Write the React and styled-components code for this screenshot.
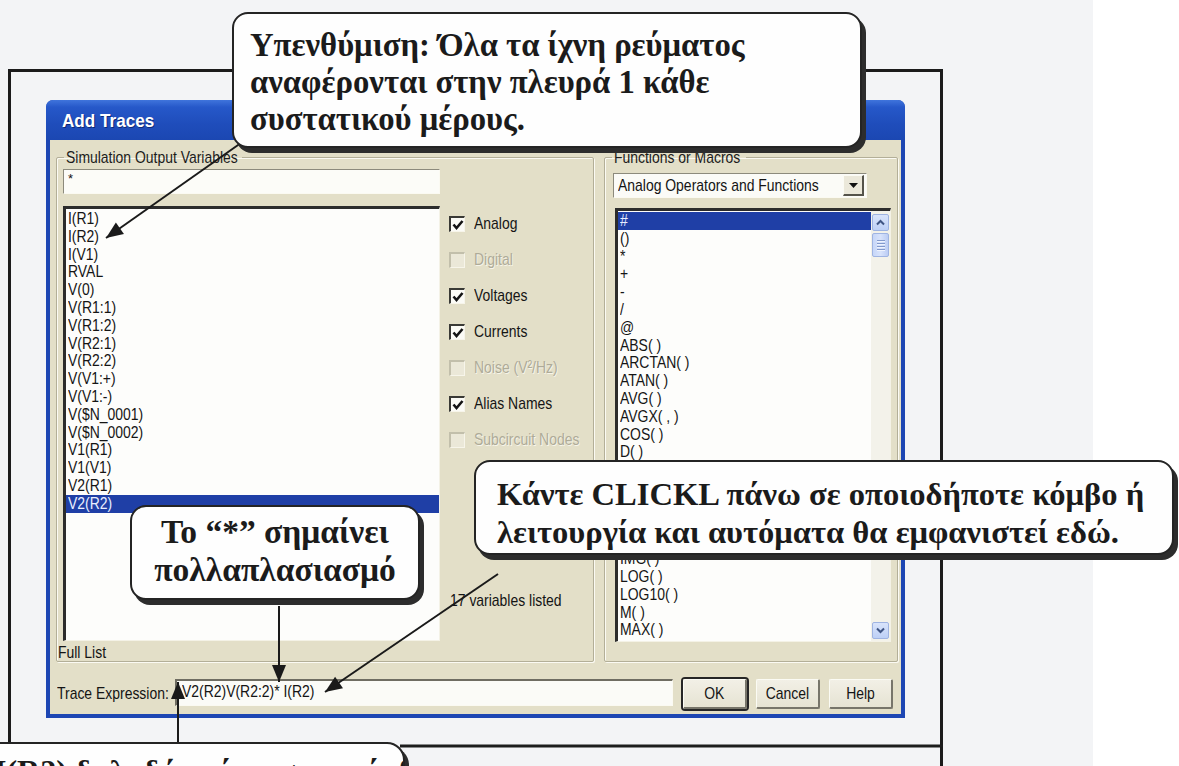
import React from "react";
import styled, { createGlobalStyle } from "styled-components";

const Global = createGlobalStyle`
  html, body { margin: 0; padding: 0; }
  body { background: #ffffff; overflow: hidden; }
  * { box-sizing: border-box; }
`;

const UI_FONT = `"Liberation Sans", Arial, sans-serif`;
const NOTE_FONT = `"Liberation Serif", "DejaVu Serif", serif`;

/* Classic dialog lettering is tall and narrow: squeeze Arial-width glyphs horizontally. */
const Txt = styled.span`
  display: inline-block;
  white-space: nowrap;
  transform: scaleX(${(p) => p.$k || 0.82});
  transform-origin: ${(p) => (p.$center ? "50% 50%" : "0 50%")};
`;

const Page = styled.div`
  display: flex;
  width: 1179px;
  height: 766px;
  overflow: hidden;
`;

const Sheet = styled.div`
  position: relative;
  width: 1093px;
  height: 766px;
  background: #f3f4f6;
  flex: none;
`;

const Margin = styled.div`
  flex: 1;
  background: #ffffff;
`;

const Frame = styled.div`
  margin: 69px 0 0 8px;
  width: 935px;
  height: 720px;
  border: 3px solid #1b1b1b;
  border-bottom: none;
  padding: 28px 0 0 35px;
`;

const Dialog = styled.div`
  width: 859px;
  height: 618px;
  display: flex;
  flex-direction: column;
  background: #1d46b3;
  border-radius: 7px 7px 0 0;
  padding: 0 4px 4px 4px;
  font-family: ${UI_FONT};
  font-size: 17px;
  color: #141414;
`;

const TitleBar = styled.div`
  height: 40px;
  display: flex;
  align-items: center;
  padding: 2px 0 0 16px;
  background: linear-gradient(180deg, #3f74dc 0%, #2658c9 18%, #1f4dbb 60%, #1b47b2 100%);
  margin: 0 -4px;
  border-radius: 7px 7px 0 0;
  color: #ffffff;
  font-weight: 700;
  font-size: 19px;
  text-shadow: 1px 1px 0 #0c2a78;
`;

const Body = styled.div`
  flex: 1;
  background: #e3dfc8;
  display: flex;
  flex-direction: column;
  padding: 9px 3px 4px 6px;
`;

const Groups = styled.div`
  display: flex;
  gap: 10px;
  height: 513px;
`;

const Group = styled.fieldset`
  margin: 0;
  padding: 0;
  min-width: 0;
  width: ${(p) => p.$w}px;
  border: 1px solid #b3af98;
  box-shadow: inset 1px 1px 0 #fbfaf3, 1px 1px 0 #fbfaf3;
  border-radius: 2px;
`;

const Legend = styled.legend`
  margin-left: 7px;
  padding: 0 2px;
  width: ${(p) => p.$w}px;
  height: 17px;
  line-height: 17px;
  color: #1c1c1c;
  overflow: visible;
`;

const VarsGrid = styled.div`
  display: grid;
  grid-template-columns: 377px 1fr;
  grid-template-rows: 25px 435px 1fr;
  column-gap: 9px;
  row-gap: 12px;
  padding: 3px 0 0 6px;
  height: 496px;
`;

const FieldInput = styled.div`
  grid-column: 1;
  background: #fcfcf8;
  border-top: 1px solid #8c8a7c;
  border-left: 1px solid #8c8a7c;
  border-right: 1px solid #fbfaf2;
  border-bottom: 1px solid #fbfaf2;
  font-size: 13px;
  padding: 2px 4px;
  line-height: 14px;
`;

const ListBox = styled.div`
  display: flex;
  background: #fdfdfb;
  border-top: 3px solid #2c2c2c;
  border-left: 3px solid #2c2c2c;
  border-right: 1px solid #f4f2e6;
  border-bottom: 1px solid #f4f2e6;
  width: ${(p) => (p.$w ? `${p.$w}px` : "auto")};
  height: ${(p) => (p.$h ? `${p.$h}px` : "auto")};
  overflow: hidden;
`;

const Items = styled.div`
  flex: 1;
  padding-top: 1px;
  overflow: hidden;
`;

const Item = styled.div`
  height: 17.8px;
  line-height: 17.8px;
  padding-left: 2px;
  white-space: nowrap;
  background: ${(p) => (p.$selected ? "#1f3fa6" : "transparent")};
  color: ${(p) => (p.$selected ? "#e9eeff" : "#151515")};
`;

const Checks = styled.div`
  display: flex;
  flex-direction: column;
`;

const CheckRow = styled.div`
  display: flex;
  align-items: center;
  height: 36px;
  gap: 9px;
  white-space: nowrap;
  color: ${(p) => (p.$disabled ? "#aeab98" : "#151515")};
  text-shadow: ${(p) => (p.$disabled ? "1px 1px 0 #f7f5ea" : "none")};
`;

const Box = styled.span`
  width: 16px;
  height: 16px;
  flex: none;
  display: flex;
  align-items: center;
  justify-content: center;
  background: ${(p) => (p.$disabled ? "#ebe8d8" : "#fbfbf6")};
  border-top: 2px solid ${(p) => (p.$disabled ? "#c2bfab" : "#3a3a36")};
  border-left: 2px solid ${(p) => (p.$disabled ? "#c2bfab" : "#3a3a36")};
  border-right: 1px solid #f7f5ea;
  border-bottom: 1px solid #f7f5ea;
`;

const Count = styled.div`
  margin-top: auto;
  margin-bottom: 30px;
  padding-left: 1px;
`;

const FooterNote = styled.div`
  grid-column: 1;
  margin-top: -10px;
  margin-left: -5px;
`;

const FuncsCol = styled.div`
  display: flex;
  flex-direction: column;
  padding: 7px 0 0 8px;
`;

const Combo = styled.div`
  display: flex;
  align-items: center;
  width: 254px;
  height: 25px;
  background: #fbfbf7;
  border-top: 1px solid #8c8a7c;
  border-left: 1px solid #8c8a7c;
  border-right: 1px solid #fbfaf2;
  border-bottom: 1px solid #fbfaf2;
  padding-left: 4px;
`;

const ComboText = styled.span`
  flex: 1;
  overflow: hidden;
`;

const ComboButton = styled.span`
  width: 21px;
  height: 21px;
  margin-right: 2px;
  flex: none;
  display: flex;
  align-items: center;
  justify-content: center;
  background: #ebe8da;
  border-top: 1px solid #fbfbf4;
  border-left: 1px solid #fbfbf4;
  border-right: 2px solid #55534a;
  border-bottom: 2px solid #55534a;
`;

const FuncList = styled(ListBox)`
  margin-top: 10px;
  margin-left: 2px;
`;

const ScrollTrack = styled.div`
  width: 19px;
  flex: none;
  display: flex;
  flex-direction: column;
  padding: 3px 1px 2px 1px;
  background: #f3f2ea;
`;

const ScrollBtn = styled.div`
  width: 17px;
  height: 17px;
  display: flex;
  align-items: center;
  justify-content: center;
  background: linear-gradient(180deg, #d9e4fb 0%, #bdd0f6 100%);
  border: 1px solid #9fb4e2;
  border-radius: 2px;
  margin-top: ${(p) => (p.$bottom ? "auto" : "0")};
`;

const Thumb = styled.div`
  width: 17px;
  height: 24px;
  margin-top: 2px;
  display: flex;
  flex-direction: column;
  align-items: center;
  justify-content: center;
  gap: 2px;
  background: linear-gradient(90deg, #c6d6f8 0%, #d8e3fb 50%, #bccdf4 100%);
  border: 1px solid #9fb4e2;
  border-radius: 2px;
`;

const Grip = styled.span`
  width: 8px;
  height: 1px;
  background: #8299cc;
  box-shadow: 0 1px 0 #eef3fe;
`;

const BottomRow = styled.div`
  display: flex;
  align-items: center;
  margin-top: 16px;
  height: 32px;
  padding-left: 1px;
`;

const ExprLabel = styled.span`
  width: 118px;
  flex: none;
  white-space: nowrap;
`;

const ExprInput = styled.div`
  width: 498px;
  height: 27px;
  flex: none;
  background: #fbfbf7;
  border-top: 2px solid #6f6d62;
  border-left: 2px solid #6f6d62;
  border-right: 1px solid #fbfaf2;
  border-bottom: 1px solid #fbfaf2;
  line-height: 22px;
  padding-left: 5px;
  margin-top: -4px;
  white-space: nowrap;
  overflow: hidden;
`;

const Buttons = styled.div`
  display: flex;
  gap: 9px;
  margin-left: 10px;
`;

const Button = styled.div`
  width: 64px;
  height: 30px;
  display: flex;
  align-items: center;
  justify-content: center;
  background: linear-gradient(180deg, #f2f0e6 0%, #e6e3d3 100%);
  border-radius: 2px;
  border-top: 1px solid #fbfbf4;
  border-left: 1px solid #fbfbf4;
  border-right: 2px solid #77756a;
  border-bottom: 2px solid #77756a;
  box-shadow: ${(p) => (p.$default ? "0 0 0 2px #262626" : "none")};
`;

const Callout = styled.div`
  position: absolute;
  left: ${(p) => p.$x}px;
  top: ${(p) => p.$y}px;
  width: ${(p) => p.$w}px;
  height: ${(p) => p.$h}px;
  padding: ${(p) => p.$pad};
  background: #fefefe;
  border: 2px solid #242424;
  border-radius: ${(p) => p.$radius || "16px"};
  box-shadow: 4px 5px 0 #2d2d2d;
  font-family: ${NOTE_FONT};
  font-weight: 700;
  font-size: ${(p) => p.$size}px;
  line-height: ${(p) => p.$lh}px;
  text-align: ${(p) => p.$align || "left"};
  color: #1b1b1b;
  white-space: nowrap;
  overflow: hidden;
`;

const Arrows = styled.svg`
  position: absolute;
  left: 0;
  top: 0;
  width: 1093px;
  height: 766px;
  pointer-events: none;
`;

const leftVars = [
  "I(R1)", "I(R2)", "I(V1)", "RVAL", "V(0)", "V(R1:1)", "V(R1:2)", "V(R2:1)", "V(R2:2)",
  "V(V1:+)", "V(V1:-)", "V($N_0001)", "V($N_0002)", "V1(R1)", "V1(V1)", "V2(R1)", "V2(R2)",
];

const funcs = [
  "#", "()", "*", "+", "-", "/", "@", "ABS( )", "ARCTAN( )", "ATAN( )", "AVG( )", "AVGX( , )",
  "COS( )", "D( )", "DB( )", "ENVMAX( , )", "ENVMIN( , )", "EXP( )", "G( )", "IMG( )", "LOG( )",
  "LOG10( )", "M( )", "MAX( )",
];

const filters = [
  { label: "Analog", checked: true },
  { label: "Digital", disabled: true },
  { label: "Voltages", checked: true },
  { label: "Currents", checked: true },
  { label: "Noise (V²/Hz)", disabled: true },
  { label: "Alias Names", checked: true },
  { label: "Subcircuit Nodes", disabled: true },
];

function Tick() {
  return (
    <svg width="12" height="12" viewBox="0 0 12 12">
      <path d="M1.5 5.5 L4.5 9 L10.5 2" fill="none" stroke="#141414" strokeWidth="2.6" />
    </svg>
  );
}

function Chevron({ down }) {
  return (
    <svg width="9" height="7" viewBox="0 0 9 7">
      <path
        d={down ? "M1 1.5 L4.5 5 L8 1.5" : "M1 5.5 L4.5 2 L8 5.5"}
        fill="none"
        stroke="#3f5584"
        strokeWidth="2"
      />
    </svg>
  );
}

function Head({ x, y, angle }) {
  return (
    <polygon
      points="0,0 -17,-7 -17,7"
      fill="#1a1a1a"
      transform={`translate(${x} ${y}) rotate(${angle})`}
    />
  );
}

function Arrow({ x1, y1, x2, y2 }) {
  const angle = (Math.atan2(y2 - y1, x2 - x1) * 180) / Math.PI;
  return (
    <g>
      <line x1={x1} y1={y1} x2={x2} y2={y2} stroke="#1a1a1a" strokeWidth="2" />
      <Head x={x2} y={y2} angle={angle} />
    </g>
  );
}

export default function App() {
  return (
    <Page>
      <Global />
      <Sheet>
        <Frame>
          <Dialog>
            <TitleBar>
              <Txt $k={0.9}>Add Traces</Txt>
            </TitleBar>
            <Body>
              <Groups>
                <Group $w={538}>
                  <Legend $w={178}>
                    <Txt>Simulation Output Variables</Txt>
                  </Legend>
                  <VarsGrid>
                    <FieldInput>*</FieldInput>
                    <div />
                    <ListBox $h={435}>
                      <Items>
                        {leftVars.map((v) => (
                          <Item key={v} $selected={v === "V2(R2)"}>
                            <Txt>{v}</Txt>
                          </Item>
                        ))}
                      </Items>
                    </ListBox>
                    <Checks>
                      {filters.map((f) => (
                        <CheckRow key={f.label} $disabled={f.disabled}>
                          <Box $disabled={f.disabled}>{f.checked && <Tick />}</Box>
                          <Txt>{f.label}</Txt>
                        </CheckRow>
                      ))}
                      <Count>
                        <Txt>17 variables listed</Txt>
                      </Count>
                    </Checks>
                    <FooterNote>
                      <Txt>Full List</Txt>
                    </FooterNote>
                  </VarsGrid>
                </Group>
                <Group $w={294}>
                  <Legend $w={134}>
                    <Txt>Functions or Macros</Txt>
                  </Legend>
                  <FuncsCol>
                    <Combo>
                      <ComboText>
                        <Txt>Analog Operators and Functions</Txt>
                      </ComboText>
                      <ComboButton>
                        <svg width="9" height="5" viewBox="0 0 9 5">
                          <path d="M0 0 H9 L4.5 5 Z" fill="#111" />
                        </svg>
                      </ComboButton>
                    </Combo>
                    <FuncList $w={276} $h={434}>
                      <Items>
                        {funcs.map((f) => (
                          <Item key={f} $selected={f === "#"}>
                            <Txt>{f}</Txt>
                          </Item>
                        ))}
                      </Items>
                      <ScrollTrack>
                        <ScrollBtn>
                          <Chevron />
                        </ScrollBtn>
                        <Thumb>
                          <Grip />
                          <Grip />
                          <Grip />
                          <Grip />
                        </Thumb>
                        <ScrollBtn $bottom>
                          <Chevron down />
                        </ScrollBtn>
                      </ScrollTrack>
                    </FuncList>
                  </FuncsCol>
                </Group>
              </Groups>
              <BottomRow>
                <ExprLabel>
                  <Txt>Trace Expression:</Txt>
                </ExprLabel>
                <ExprInput>
                  <Txt>V2(R2)V(R2:2)* I(R2)</Txt>
                </ExprInput>
                <Buttons>
                  <Button $default>
                    <Txt $center>OK</Txt>
                  </Button>
                  <Button>
                    <Txt $center>Cancel</Txt>
                  </Button>
                  <Button>
                    <Txt $center>Help</Txt>
                  </Button>
                </Buttons>
              </BottomRow>
            </Body>
          </Dialog>
        </Frame>

        <Arrows viewBox="0 0 1093 766">
          <Arrow x1={248} y1={138} x2={106} y2={238} />
          <Arrow x1={279} y1={606} x2={279} y2={682} />
          <Arrow x1={498} y1={574} x2={325} y2={692} />
          <Arrow x1={178} y1={742} x2={178} y2={682} />
          <line x1={400} y1={746} x2={943} y2={746} stroke="#1d1d1d" strokeWidth="3" />
        </Arrows>

        <Callout $x={232} $y={12} $w={630} $h={136} $pad="13px 0 0 16px" $size={32.7} $lh={37}>
          Υπενθύμιση: Όλα τα ίχνη ρεύματος
          <br />
          αναφέρονται στην πλευρά 1 κάθε
          <br />
          συστατικού μέρους.
        </Callout>

        <Callout
          $x={130}
          $y={505}
          $w={290}
          $h={95}
          $pad="6px 0 0 0"
          $size={33.5}
          $lh={38}
          $align="center"
        >
          Το “*” σημαίνει
          <br />
          πολλαπλασιασμό
        </Callout>

        <Callout $x={474} $y={460} $w={700} $h={95} $pad="13px 0 0 21px" $size={32.6} $lh={38}>
          Κάντε CLICKL πάνω σε οποιοδήποτε κόμβο ή
          <br />
          λειτουργία και αυτόματα θα εμφανιστεί εδώ.
        </Callout>

        <Callout
          $x={-20}
          $y={742}
          $w={425}
          $h={70}
          $pad="8px 0 0 12px"
          $size={32}
          $lh={38}
          $radius="0 18px 0 0"
        >
          I(R2) δηλαδή ρεύμα στον κόμβο
        </Callout>
      </Sheet>
      <Margin />
    </Page>
  );
}
